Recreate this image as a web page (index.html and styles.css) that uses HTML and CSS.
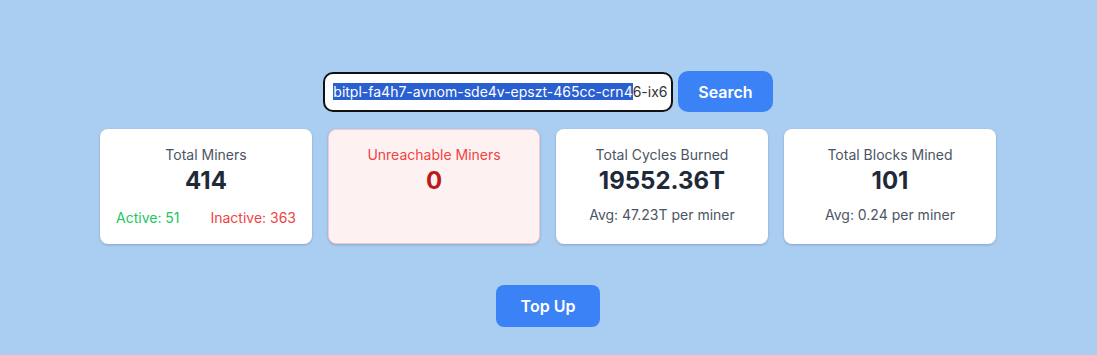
FILE: index.html
```html
<!DOCTYPE html>
<html>
<head>
<title>Miner Dashboard</title>
<link rel="stylesheet" href="styles.css">
</head>
<body>

<!-- ====================================================== -->
<div class="search-row">
    <div class="search-input"><span class="sel">bitpl-fa4h7-avnom-sde4v-epszt-465cc-crn4</span>6-ix6</div>
    <button class="btn btn-search">Search</button>
</div>

<!-- ====================================================== -->
<div class="stats">
    <div class="card">
        <div class="card-title">Total Miners</div>
        <div class="card-value">414</div>
        <div class="card-split">
            <span class="active">Active: 51</span>
            <span class="inactive">Inactive: 363</span>
        </div>
    </div>

    <div class="card card-alert">
        <div class="card-title">Unreachable Miners</div>
        <div class="card-value">0</div>
    </div>

    <div class="card">
        <div class="card-title">Total Cycles Burned</div>
        <div class="card-value">19552.36T</div>
        <div class="card-note">Avg: 47.23T per miner</div>
    </div>

    <div class="card">
        <div class="card-title">Total Blocks Mined</div>
        <div class="card-value">101</div>
        <div class="card-note">Avg: 0.24 per miner</div>
    </div>
</div>

<!-- ====================================================== -->
<div class="actions">
    <button class="btn btn-topup">Top Up</button>
</div>

</body>
</html>
```

FILE: styles.css
```css
/*-----------------------------------------------------------------*/
body {
    margin:             0;
    padding-top:        71px;
    padding-right:      1px;
    background:         #aacdf2;
    font-family:        Inter, "Noto Sans", sans-serif;
    color:              #1f2937;
}

/*-----------------------------------------------------------------*/
.search-row {
    display:            flex;
    justify-content:    center;
    align-items:        center;
    gap:                5px;
}

.search-input {
    box-sizing:         border-box;
    width:              350px;
    height:             40px;
    padding:            0 8px;
    border:             2px solid #111;
    border-radius:      10px;
    background:         #fff;
    font-size:          14px;
    line-height:        36px;
    color:              #333;
    white-space:        nowrap;
    overflow:           hidden;
}

.search-input .sel {
    background:         #2a5fd1;
    color:              #fff;
}

/*-----------------------------------------------------------------*/
.btn {
    border:             0;
    background:         #3b82f6;
    color:              #fff;
    font-family:        inherit;
    font-size:          16px;
    font-weight:        600;
    cursor:             pointer;
}

.btn-search {
    height:             41px;
    padding:            0 20px;
    border-radius:      10px;
}

.btn-topup {
    height:             42px;
    padding:            0 25px;
    border-radius:      8px;
}

/*-----------------------------------------------------------------*/
.stats {
    display:            grid;
    grid-template-columns: repeat(4, 1fr);
    gap:                16px;
    width:              896px;
    margin:             17px auto 0;
}

.card {
    background:         #fff;
    border-radius:      8px;
    padding:            16px;
    height:             115px;
    box-sizing:         border-box;
    text-align:         center;
    box-shadow:         0 1px 3px rgba(0,0,0,0.12), 0 1px 2px rgba(0,0,0,0.08);
}

.card-alert {
    background:         #fef1f1;
    border:             1px solid #f3c9cc;
    padding:            15px;
}

.card-title {
    font-size:          14px;
    line-height:        20px;
    color:              #4b5563;
}

.card-alert .card-title {
    color:              #ef4444;
}

.card-value {
    font-size:          24px;
    line-height:        32px;
    font-weight:        700;
    color:              #1f2937;
}

.card-alert .card-value {
    color:              #b91c1c;
}

.card-split {
    display:            flex;
    justify-content:    space-between;
    margin-top:         11px;
    font-size:          14px;
    line-height:        20px;
}

.active {
    color:              #22c55e;
}

.inactive {
    color:              #ef4444;
}

.card-note {
    margin-top:         8px;
    font-size:          14px;
    line-height:        20px;
    color:              #4b5563;
}

/*-----------------------------------------------------------------*/
.actions {
    display:            flex;
    justify-content:    center;
    margin-top:         41px;
}
```
